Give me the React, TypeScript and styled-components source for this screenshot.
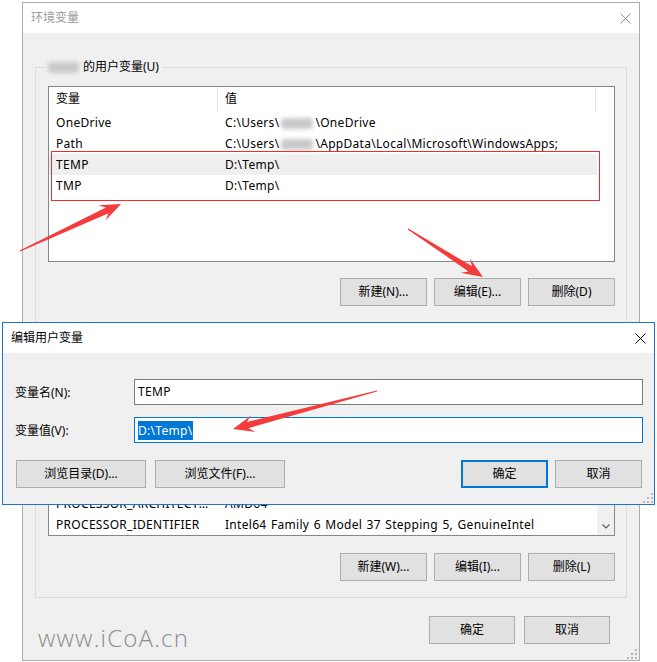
import React from "react";
import styled, { createGlobalStyle } from "styled-components";

const GlobalStyle = createGlobalStyle`
  html, body { margin: 0; padding: 0; background: #ffffff; }
  body {
    font-family: "Noto Sans", "Noto Sans CJK SC", sans-serif;
    font-size: 12px;
    color: #000;
  }
`;

const Desktop = styled.div`
  position: relative;
  width: 657px;
  height: 662px;
  box-sizing: border-box;
  padding: 2px 0 0 22px;
  overflow: hidden;
`;

const Window = styled.div`
  position: relative;
  width: 618px;
  height: 659px;
  box-sizing: border-box;
  border: 1px solid #ababab;
  background: #f0f0f0;
  display: flex;
  flex-direction: column;
`;

const TitleBar = styled.div<{ $active?: boolean; $h: number }>`
  flex: none;
  height: ${(p) => p.$h}px;
  background: #ffffff;
  display: flex;
  align-items: center;
  justify-content: space-between;
  padding-left: 8px;
  color: ${(p) => (p.$active ? "#000000" : "#9a9a9a")};
  line-height: 16px;
`;

const CloseBox = styled.div`
  width: 28px;
  height: 100%;
  display: flex;
  align-items: center;
  justify-content: center;
`;

const WindowBody = styled.div`
  flex: 1;
  display: flex;
  flex-direction: column;
  padding: 34px 12px 16px 12px;
`;

const Group = styled.div<{ $mt: number }>`
  position: relative;
  margin-top: ${(p) => p.$mt}px;
  border: 1px solid #dcdcdc;
  padding: 18px 11px 16px 12px;
`;

const Legend = styled.div`
  position: absolute;
  top: -9px;
  left: 8px;
  padding: 0 3px 0 2px;
  background: #f0f0f0;
  line-height: 16px;
  display: flex;
  align-items: center;
`;

const Blob = styled.span<{ $w: number }>`
  display: inline-block;
  width: ${(p) => p.$w}px;
  height: 11px;
  margin: 0 2px;
  border-radius: 4px;
  background: #c9c9c9;
  filter: blur(2px);
  vertical-align: middle;
`;

const ListBox = styled.div<{ $h: number }>`
  height: ${(p) => p.$h}px;
  box-sizing: border-box;
  border: 1px solid #828790;
  background: #ffffff;
  display: flex;
  overflow: hidden;
`;

const ListMain = styled.div`
  width: 548px;
  display: flex;
  flex-direction: column;
`;

const Header = styled.div`
  flex: none;
  display: flex;
  height: 25px;
`;

const HeaderCell = styled.div<{ $w: number }>`
  width: ${(p) => p.$w}px;
  box-sizing: border-box;
  border-right: 1px solid #e5e5e5;
  padding-left: 7px;
  line-height: 24px;
`;

const RowArea = styled.div<{ $bottom?: boolean }>`
  flex: 1;
  display: flex;
  flex-direction: column;
  justify-content: ${(p) => (p.$bottom ? "flex-end" : "flex-start")};
  overflow: ${(p) => (p.$bottom ? "hidden" : "visible")};
`;

const Row = styled.div<{ $hl?: boolean }>`
  flex: none;
  display: grid;
  grid-template-columns: 169px 1fr;
  height: 21px;
  line-height: 21px;
  background: ${(p) => (p.$hl ? "#efefef" : "transparent")};
`;

const Cell = styled.div`
  padding-left: 7px;
  padding-right: 6px;
  white-space: nowrap;
  overflow: hidden;
  text-overflow: ellipsis;
  letter-spacing: 0.3px;
  word-spacing: 1px;
`;

const Marked = styled.div`
  position: relative;
  &::after {
    content: "";
    position: absolute;
    top: -3px;
    left: 2px;
    right: -3px;
    bottom: -5px;
    border: 1px solid #f22b2b;
    pointer-events: none;
  }
`;

const Scrollbar = styled.div`
  width: 17px;
  background: #f0f0f0;
  display: flex;
  flex-direction: column;
  justify-content: flex-end;
`;

const ScrollArrow = styled.div`
  height: 17px;
  display: flex;
  align-items: center;
  justify-content: center;
`;

const ButtonRow = styled.div<{ $mt: number }>`
  display: flex;
  justify-content: flex-end;
  gap: 7px;
  margin-top: ${(p) => p.$mt}px;
`;

const Button = styled.button<{ $w: number; $default?: boolean }>`
  width: ${(p) => p.$w}px;
  height: 28px;
  box-sizing: border-box;
  border: ${(p) => (p.$default ? "2px solid #0078d7" : "1px solid #adadad")};
  background: #e1e1e1;
  font: inherit;
  color: #000;
  padding: 0;
  line-height: 16px;
`;

const Footer = styled.div`
  display: flex;
  justify-content: space-between;
  align-items: flex-end;
  margin-top: 18px;
  padding-right: 17px;
`;

const Watermark = styled.div`
  margin-left: 3px;
  margin-bottom: -6px;
  font-family: "Open Sans", "Noto Sans", sans-serif;
  font-weight: 300;
  font-size: 24px;
  letter-spacing: 1.2px;
  line-height: 1;
  color: #8d8d8d;
`;

const ButtonGroup = styled.div<{ $gap: number }>`
  display: flex;
  gap: ${(p) => p.$gap}px;
`;

const Grip = styled.svg<{ $r: number; $b: number }>`
  position: absolute;
  right: ${(p) => p.$r}px;
  bottom: ${(p) => p.$b}px;
`;

const Dialog = styled.div`
  position: absolute;
  left: 2px;
  top: 322px;
  width: 653px;
  height: 183px;
  box-sizing: border-box;
  border: 1px solid #1a78cc;
  background: #f0f0f0;
  display: flex;
  flex-direction: column;
`;

const DialogBody = styled.div`
  flex: 1;
  display: flex;
  flex-direction: column;
  padding: 26px 11px 16px 12px;
`;

const FieldRow = styled.div<{ $mt: number }>`
  display: flex;
  align-items: center;
  margin-top: ${(p) => p.$mt}px;
`;

const FieldLabel = styled.div`
  width: 119px;
  flex: none;
`;

const TextBox = styled.div<{ $focused?: boolean }>`
  flex: 1;
  height: 26px;
  box-sizing: border-box;
  border: 1px solid ${(p) => (p.$focused ? "#0078d7" : "#7a7a7a")};
  background: #ffffff;
  padding-left: 3px;
  line-height: 24px;
  display: flex;
  align-items: center;
  letter-spacing: 0.3px;
`;

const Selection = styled.span`
  display: inline-block;
  background: #0078d7;
  color: #ffffff;
  line-height: 19px;
`;

const DialogButtons = styled.div`
  display: flex;
  justify-content: space-between;
  margin-top: 17px;
  padding: 0 1px;
`;

const Overlay = styled.svg`
  position: absolute;
  left: 0;
  top: 0;
  pointer-events: none;
`;

const CloseIcon = ({ color }: { color: string }) => (
  <svg width="11" height="11" viewBox="0 0 11 11">
    <path d="M0.5 0.5 L10.5 10.5 M10.5 0.5 L0.5 10.5" stroke={color} strokeWidth="1" fill="none" />
  </svg>
);

const GripDots = ({ r, b }: { r: number; b: number }) => (
  <Grip $r={r} $b={b} width="10" height="10" viewBox="0 0 10 10">
    {[
      [8, 0],
      [4, 4],
      [8, 4],
      [0, 8],
      [4, 8],
      [8, 8],
    ].map(([x, y], i) => (
      <rect key={i} x={x} y={y} width="2" height="2" fill="#b8b8b8" />
    ))}
  </Grip>
);

function arrowPoints(tx: number, ty: number, px: number, py: number, head = 21, hw = 8.5, sw = 3.2, tw = 0.5) {
  const dx = px - tx;
  const dy = py - ty;
  const L = Math.hypot(dx, dy);
  const ux = dx / L;
  const uy = dy / L;
  const nx = -uy;
  const ny = ux;
  const bx = px - ux * head;
  const by = py - uy * head;
  const kx = px - ux * head * 0.72;
  const ky = py - uy * head * 0.72;
  const pts = [
    [tx + nx * tw, ty + ny * tw],
    [kx + nx * sw, ky + ny * sw],
    [bx + nx * hw, by + ny * hw],
    [px, py],
    [bx - nx * hw, by - ny * hw],
    [kx - nx * sw, ky - ny * sw],
    [tx - nx * tw, ty - ny * tw],
  ];
  return pts.map((p) => `${p[0].toFixed(1)},${p[1].toFixed(1)}`).join(" ");
}

const userRows = [
  { name: "OneDrive", value: <>C:\Users\<Blob $w={32} />\OneDrive</> },
  { name: "Path", value: <>C:\Users\<Blob $w={32} />\AppData\Local\Microsoft\WindowsApps;</> },
];

const sysRows = [
  { name: "NUMBER_OF_PROCESSORS", value: "2" },
  { name: "OS", value: "Windows_NT" },
  { name: "Path", value: "C:\\Windows\\system32;C:\\Windows;C:\\Windows\\System32\\Wbem;" },
  { name: "PATHEXT", value: ".COM;.EXE;.BAT;.CMD;.VBS;.VBE;.JS;.JSE;.WSF;.WSH;.MSC" },
  { name: "PROCESSOR_ARCHITECTURE", value: "AMD64" },
  { name: "PROCESSOR_IDENTIFIER", value: "Intel64 Family 6 Model 37 Stepping 5, GenuineIntel" },
];

export default function App() {
  return (
    <>
      <GlobalStyle />
      <Desktop>
        <Window>
          <TitleBar $h={30}>
            <span>环境变量</span>
            <CloseBox>
              <CloseIcon color="#8e8e8e" />
            </CloseBox>
          </TitleBar>
          <WindowBody>
            <Group $mt={0}>
              <Legend>
                <Blob $w={31} />
                <span style={{ marginLeft: 2 }}>的用户变量(U)</span>
              </Legend>
              <ListBox $h={176}>
                <ListMain>
                  <Header>
                    <HeaderCell $w={169}>变量</HeaderCell>
                    <HeaderCell $w={378}>值</HeaderCell>
                  </Header>
                  <RowArea>
                    {userRows.map((r) => (
                      <Row key={r.name}>
                        <Cell>{r.name}</Cell>
                        <Cell>{r.value}</Cell>
                      </Row>
                    ))}
                    <Marked>
                      <Row $hl>
                        <Cell>TEMP</Cell>
                        <Cell>D:\Temp\</Cell>
                      </Row>
                      <Row>
                        <Cell>TMP</Cell>
                        <Cell>D:\Temp\</Cell>
                      </Row>
                    </Marked>
                  </RowArea>
                </ListMain>
              </ListBox>
              <ButtonRow $mt={16}>
                <Button $w={87}>新建(N)...</Button>
                <Button $w={87}>编辑(E)...</Button>
                <Button $w={87}>删除(D)</Button>
              </ButtonRow>
            </Group>

            <Group $mt={19}>
              <Legend>系统变量(S)</Legend>
              <ListBox $h={175}>
                <ListMain>
                  <Header>
                    <HeaderCell $w={169}>变量</HeaderCell>
                    <HeaderCell $w={378}>值</HeaderCell>
                  </Header>
                  <RowArea $bottom>
                    {sysRows.map((r) => (
                      <Row key={r.name}>
                        <Cell>{r.name}</Cell>
                        <Cell>{r.value}</Cell>
                      </Row>
                    ))}
                  </RowArea>
                </ListMain>
                <Scrollbar>
                  <ScrollArrow>
                    <svg width="8" height="5" viewBox="0 0 8 5">
                      <path d="M0.5 0.5 L4 4 L7.5 0.5" stroke="#606060" strokeWidth="1.2" fill="none" />
                    </svg>
                  </ScrollArrow>
                </Scrollbar>
              </ListBox>
              <ButtonRow $mt={17}>
                <Button $w={87}>新建(W)...</Button>
                <Button $w={87}>编辑(I)...</Button>
                <Button $w={87}>删除(L)</Button>
              </ButtonRow>
            </Group>

            <Footer>
              <Watermark>www.iCoA.cn</Watermark>
              <ButtonGroup $gap={9}>
                <Button $w={86}>确定</Button>
                <Button $w={86}>取消</Button>
              </ButtonGroup>
            </Footer>
          </WindowBody>
          <GripDots r={2} b={1} />
        </Window>

        <Dialog>
          <TitleBar $h={30} $active>
            <span>编辑用户变量</span>
            <CloseBox>
              <CloseIcon color="#000000" />
            </CloseBox>
          </TitleBar>
          <DialogBody>
            <FieldRow $mt={0}>
              <FieldLabel>变量名(N):</FieldLabel>
              <TextBox>TEMP</TextBox>
            </FieldRow>
            <FieldRow $mt={12}>
              <FieldLabel>变量值(V):</FieldLabel>
              <TextBox $focused>
                <Selection>D:\Temp\</Selection>
              </TextBox>
            </FieldRow>
            <DialogButtons>
              <ButtonGroup $gap={9}>
                <Button $w={130}>浏览目录(D)...</Button>
                <Button $w={130}>浏览文件(F)...</Button>
              </ButtonGroup>
              <ButtonGroup $gap={7}>
                <Button $w={87} $default>确定</Button>
                <Button $w={87}>取消</Button>
              </ButtonGroup>
            </DialogButtons>
          </DialogBody>
          <GripDots r={1} b={1} />
        </Dialog>

        <Overlay width="657" height="662" viewBox="0 0 657 662">
          <polygon points={arrowPoints(20, 251, 121, 204)} fill="#f53c3c" />
          <polygon points={arrowPoints(408, 229, 483, 277)} fill="#f53c3c" />
          <polygon points={arrowPoints(377, 391, 233, 429)} fill="#f53c3c" />
        </Overlay>
      </Desktop>
    </>
  );
}
